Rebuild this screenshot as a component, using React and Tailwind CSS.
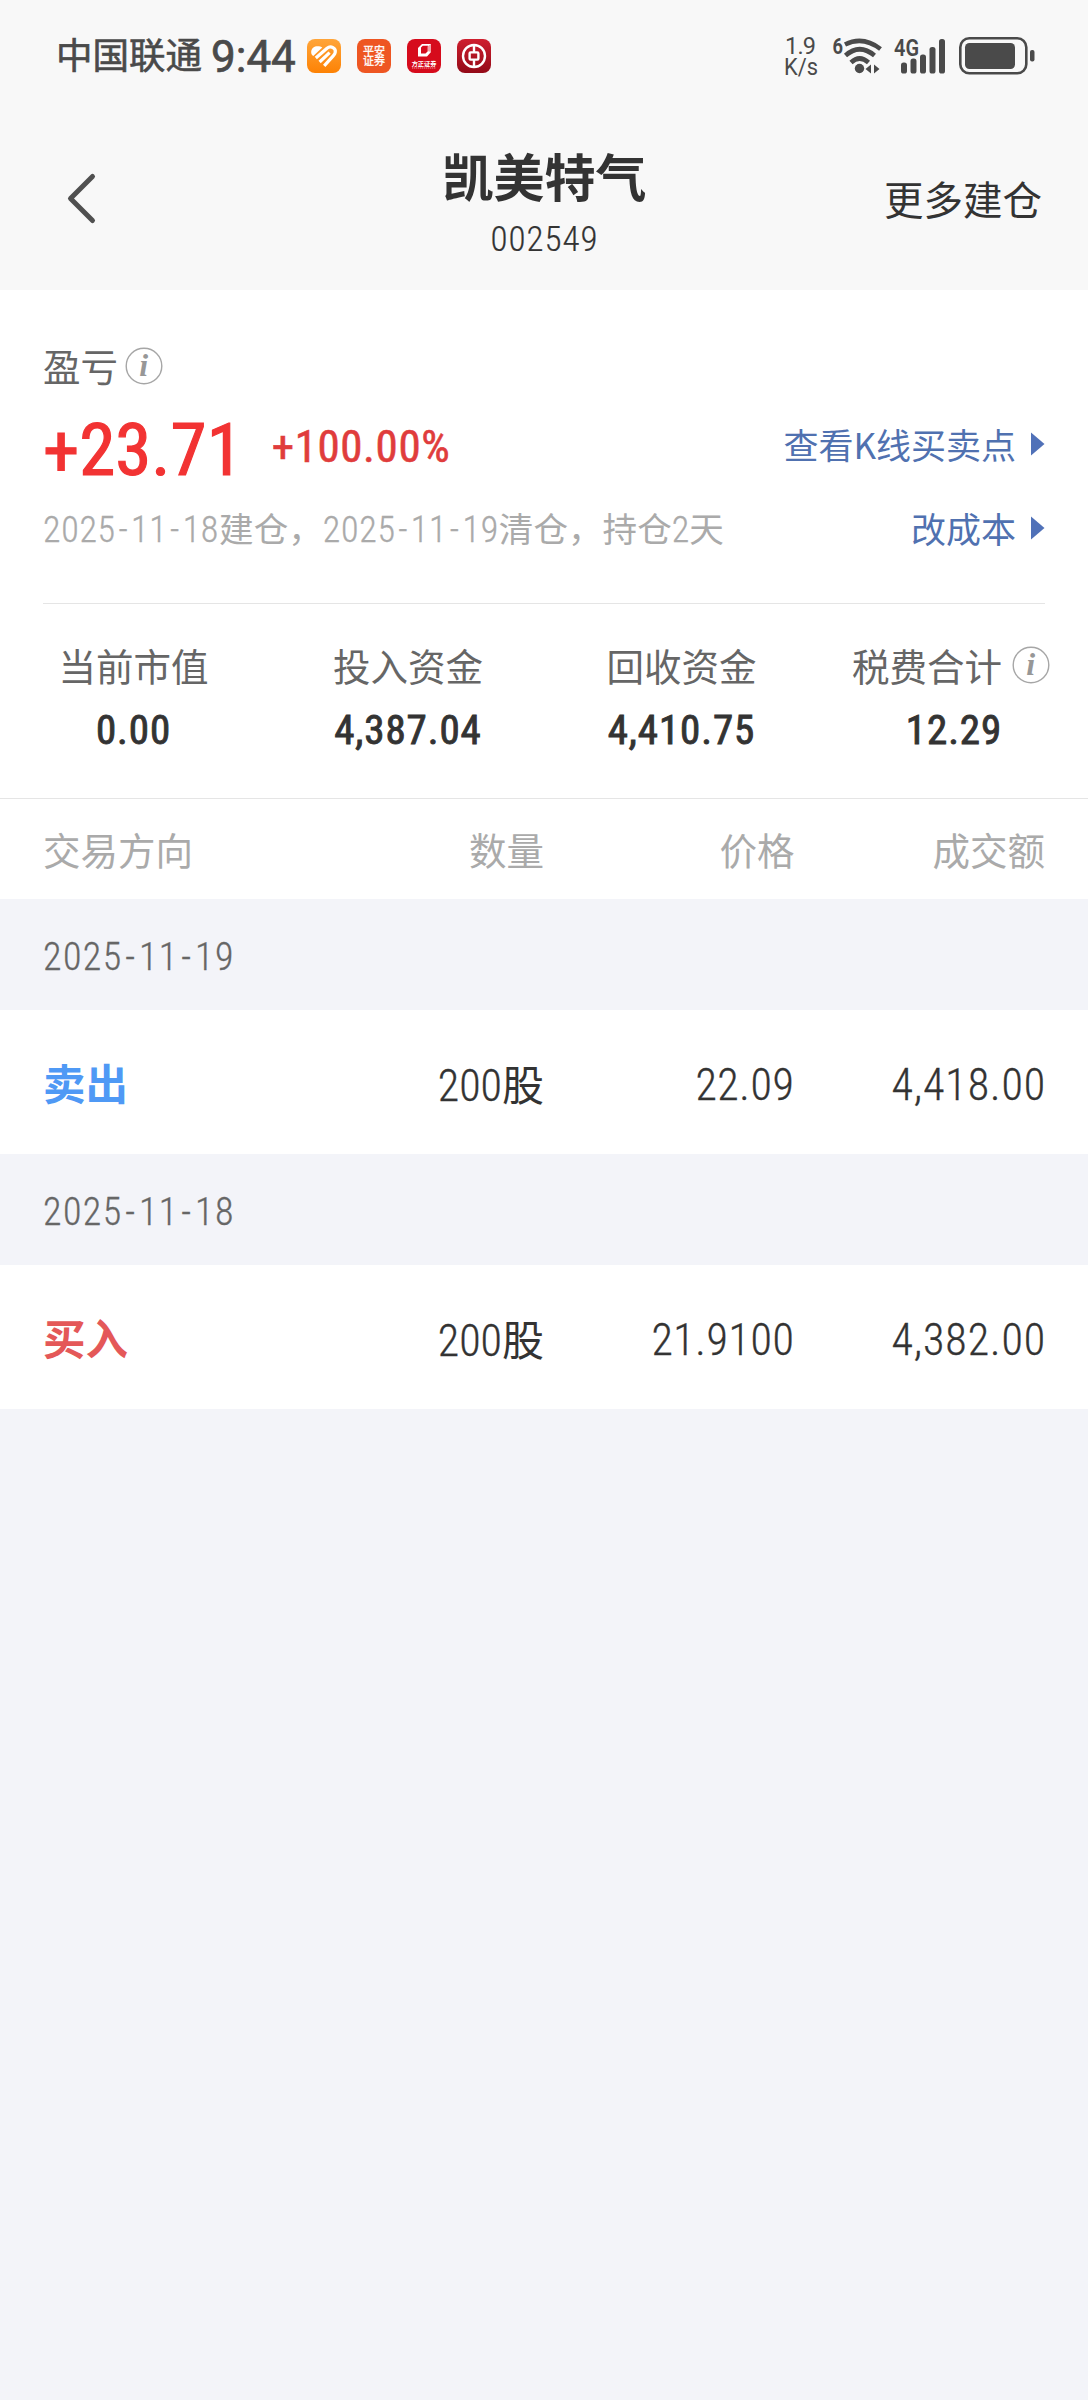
import clsx from "clsx";

const stats = [
  { label: "当前市值", value: "0.00" },
  { label: "投入资金", value: "4,387.04" },
  { label: "回收资金", value: "4,410.75" },
  { label: "税费合计", value: "12.29", info: true },
];

const trades = [
  { date: "2025-11-19", side: "卖出", color: "text-[#4f99f5]", qty: "200", price: "22.09", amount: "4,418.00" },
  { date: "2025-11-18", side: "买入", color: "text-[#e45858]", qty: "200", price: "21.9100", amount: "4,382.00" },
];

function Num({ className, children }) {
  return (
    <span className={clsx("font-['Roboto_Condensed','Roboto',sans-serif] [font-stretch:75%]", className)}>
      {children}
    </span>
  );
}

function DateText({ value, className }) {
  return (
    <Num className={className}>
      {value.split("-").map((part, i) => (
        <span key={i}>
          {i > 0 && <span className="mx-[2.6px]">-</span>}
          {part}
        </span>
      ))}
    </Num>
  );
}

function InfoIcon({ className }) {
  return (
    <svg width="38" height="38" viewBox="0 0 38 38" className={clsx("shrink-0", className)}>
      <circle cx="19" cy="19" r="17.8" fill="none" stroke="#a6a6a6" strokeWidth="1.4" />
      <text x="18.8" y="29" textAnchor="middle" fontSize="32" fontWeight="700" fontStyle="italic" fill="#979797" fontFamily="Liberation Serif, serif">
        i
      </text>
    </svg>
  );
}

function Arrow() {
  return (
    <svg width="14" height="24" viewBox="0 0 14 24" className="ml-[15px] shrink-0">
      <path d="M0 0.5 L13.5 12 L0 23.5 Z" fill="#5071b8" />
    </svg>
  );
}

function AppIcons() {
  return (
    <div className="flex gap-4">
      <svg width="34" height="34" viewBox="0 0 34 34">
        <defs>
          <linearGradient id="orange" x1="0" y1="0" x2="0" y2="1">
            <stop offset="0" stopColor="#ffa53a" />
            <stop offset="1" stopColor="#fd8204" />
          </linearGradient>
        </defs>
        <rect width="34" height="34" rx="8" fill="url(#orange)" />
        <path d="M5 16 C2.8 12 5.5 7.6 9.5 7.3 C12 7.1 14 7.6 15.3 8.6 L6.3 17 Z" fill="#fff" />
        <g fill="none" stroke="#fff" strokeWidth="3.2">
          <path d="M8.8 19 L20 9.2 C24 6.2 29.2 9.4 28.2 13.6 C28 15 27 16 26 17.1 L17.2 26.8" />
          <path d="M12.6 23 L22.6 13.6" />
        </g>
      </svg>
      <svg width="34" height="34" viewBox="0 0 34 34">
        <rect width="34" height="34" rx="8" fill="#ee5622" />
        <g fill="#fff" fontSize="11" fontWeight="400" textAnchor="middle" fontFamily="Noto Sans CJK SC, sans-serif" stroke="#fff" strokeWidth="0.3">
          <text x="17" y="15.6">平安</text>
          <text x="17" y="26.2">证券</text>
        </g>
      </svg>
      <svg width="34" height="34" viewBox="0 0 34 34">
        <rect width="34" height="34" rx="8" fill="#d60b1c" />
        <path d="M15 5 L24 5 L24 13 L20 17.5 L11 17.5 L11 9 Z M14 8.5 L14 14.5 L18.5 14.5 L21 12 L21 6.8 L15.8 6.8 Z" fill="#fff" fillRule="evenodd" />
        <path d="M20.5 7.5 L24 5 L24 13 L20.5 12 Z" fill="#f3a3a8" />
        <text x="17" y="26.6" textAnchor="middle" fontSize="6.2" fontWeight="700" fill="#fff" fontFamily="Noto Sans CJK SC, sans-serif">方正证券</text>
        <path d="M5 29 H29" stroke="#f0a0a5" strokeWidth="0.9" strokeDasharray="1.4 0.6" />
      </svg>
      <svg width="34" height="34" viewBox="0 0 34 34">
        <defs>
          <linearGradient id="crimson" x1="0" y1="0" x2="0" y2="1">
            <stop offset="0" stopColor="#cf1f2e" />
            <stop offset="1" stopColor="#930a18" />
          </linearGradient>
        </defs>
        <rect width="34" height="34" rx="8" fill="url(#crimson)" />
        <g fill="none" stroke="#fff" strokeWidth="2.4">
          <circle cx="17" cy="17" r="11" />
          <rect x="12.6" y="13.4" width="8.8" height="7.2" rx="1" />
          <path d="M17 6 V13 M17 21 V28" />
        </g>
      </svg>
    </div>
  );
}

function StatusIcons() {
  return (
    <svg width="260" height="56" viewBox="776 28 260 56" fill="#4a4a4a" fontFamily="Roboto, sans-serif">
      <text x="785" y="54" fontSize="23.5" textLength="31">1.9</text>
      <text x="784" y="75" fontSize="23.5" textLength="34" lengthAdjust="spacingAndGlyphs">K/s</text>

      <text x="832.5" y="53.5" fontSize="22" fontWeight="700" textLength="10.5" lengthAdjust="spacingAndGlyphs">6</text>
      <g fill="none" stroke="#4a4a4a" strokeWidth="4.6">
        <path d="M845 44.5 Q863 35.5 880.5 49" />
        <path d="M845.5 55.5 Q859.5 43 874.5 55.5" />
        <path d="M851 62.5 Q859.5 54.5 868.5 62.5" />
      </g>
      <circle cx="859.5" cy="68.5" r="4.7" />
      <path d="M871 64.5 V73.5 L865.5 69 Z M874 64.5 L879.5 69 L874 73.5 Z" />

      <text x="894" y="55.5" fontSize="23" fontWeight="600" textLength="25" lengthAdjust="spacingAndGlyphs">4G</text>
      <rect x="901" y="62.5" width="6" height="11" rx="2.6" />
      <rect x="910.5" y="58.5" width="6" height="15" rx="2.6" />
      <rect x="920" y="54.5" width="6" height="19" rx="2.6" />
      <rect x="929.5" y="47" width="6" height="26.5" rx="2.6" />
      <rect x="939" y="39" width="6" height="34.5" rx="2.6" />

      <rect x="960.3" y="38.3" width="66" height="35" rx="9" fill="none" stroke="#4a4a4a" strokeWidth="2.6" />
      <rect x="965" y="43" width="50" height="26" rx="4.5" />
      <rect x="1030" y="50" width="4.5" height="11.5" rx="2" />
    </svg>
  );
}

export default function App() {
  return (
    <div className="w-[1088px] h-[2400px] bg-[#f3f4f9] text-[#333] font-['Noto_Sans_CJK_SC',sans-serif] whitespace-nowrap overflow-hidden">
      <header className="h-[290px] bg-[#f8f8f8]">
        <div className="h-28 pl-14 pr-[52px] flex items-center justify-between text-[#4a4a4a]">
          <div className="flex items-center">
            <span className="mb-[4px] text-[36.5px] leading-[44px] [-webkit-text-stroke:0.6px]">中国联通</span>
            <span className="ml-[9px] mr-[11px] mt-[2px] w-[85px] text-[44px] leading-[44px] font-['Roboto',sans-serif] [-webkit-text-stroke:0.7px]">9:44</span>
            <AppIcons />
          </div>
          <StatusIcons />
        </div>

        <div className="grid grid-cols-3 h-[178px] pl-[65px] pr-[46px]">
          <svg width="34" height="58" viewBox="0 0 34 58" className="mt-[57px]">
            <path d="M27.5 7.5 L5.5 29.5 L27.5 51.5" fill="none" stroke="#505050" strokeWidth="5" strokeLinecap="round" strokeLinejoin="round" />
          </svg>
          <div className="flex flex-col items-center -ml-[18px] pt-[33px]">
            <h1 className="text-[51px] leading-[60px] font-bold">凯美特气</h1>
            <Num className="mt-[14px] text-[35px] leading-[42px] font-light tracking-[1px] [-webkit-text-stroke:0.2px]">002549</Num>
          </div>
          <span className="justify-self-end mt-[56px] text-[39.5px] leading-[60px]">更多建仓</span>
        </div>
      </header>

      <main>
        <section className="bg-white h-[508px]">
          <div className="mx-[43px] h-[314px] pt-[52px] border-b border-[#e5e5e5]">
            <div className="flex items-center h-12 text-[#666]">
              <span className="mb-[3px] text-[37.5px] leading-[48px]">盈亏</span>
              <InfoIcon className="ml-[7px]" />
            </div>
            <div className="flex items-center justify-between mt-[14px] h-20">
              <div className="flex items-center">
                <Num className="mt-[11px] text-[73px] leading-[80px] text-[#f23333] [-webkit-text-stroke:1.2px]">+23.71</Num>
                <Num className="ml-[29px] mt-[6px] text-[45px] leading-[80px] tracking-[0.6px] text-[#e03c3c] [-webkit-text-stroke:0.6px]">+100.00%</Num>
              </div>
              <a className="flex items-center mb-px text-[35px] leading-[48px] text-[#5071b0]">
                查看K线买卖点
                <Arrow />
              </a>
            </div>
            <div className="flex items-center justify-between mt-[20px] h-12 text-[34.6px] text-[#aaa]">
              <p className="leading-[48px]">
                <DateText value="2025-11-18" className="text-[36px] font-light tracking-[0.7px] [-webkit-text-stroke:0.3px]" />
                建仓，
                <DateText value="2025-11-19" className="text-[36px] font-light tracking-[0.7px] [-webkit-text-stroke:0.3px]" />
                清仓，持仓
                <Num className="text-[36px] font-light [-webkit-text-stroke:0.3px]">2</Num>天
              </p>
              <a className="flex items-center text-[35px] leading-[48px] text-[#5071b0]">
                改成本
                <Arrow />
              </a>
            </div>
          </div>

          <div className="grid grid-cols-[267px_282px_265px_1fr] pt-[37px]">
            {stats.map((s) => (
              <div key={s.label} className="flex flex-col items-center">
                <div className="flex items-center h-12 text-[37.5px] leading-[48px] text-[#666]">
                  {s.label}
                  {s.info && <InfoIcon className="ml-2.5" />}
                </div>
                <Num className={clsx("mt-[17px] text-[41px] leading-[48px] tracking-[0.9px] [-webkit-text-stroke:0.9px]", s.info && "pl-1.5")}>
                  {s.value}
                </Num>
              </div>
            ))}
          </div>
        </section>

        <div className="grid grid-cols-4 h-[101px] px-[43px] items-center bg-white border-t border-[#e5e5e5] text-[37.5px] text-[#aaa]">
          <span>交易方向</span>
          <span className="text-right">数量</span>
          <span className="text-right">价格</span>
          <span className="text-right">成交额</span>
        </div>

        {trades.map((t) => (
          <section key={t.date}>
            <div className="flex items-center h-[111px] pl-[43px] pt-1">
              <DateText value={t.date} className="text-[38px] leading-[48px] font-light tracking-[1.4px] text-[#666] [-webkit-text-stroke:0.3px]" />
            </div>
            <div className="grid grid-cols-4 items-center h-36 px-[43px] pt-[5px] bg-white">
              <span className={clsx("mb-[5px] text-[42.5px] leading-[60px] font-bold", t.color)}>{t.side}</span>
              <span className="text-right text-[42px] leading-[60px]">
                <Num className="text-[44px] font-light [-webkit-text-stroke:0.3px]">{t.qty}</Num>股
              </span>
              <Num className="text-right text-[44px] leading-[60px] font-light tracking-[0.6px] [-webkit-text-stroke:0.3px]">{t.price}</Num>
              <Num className="-mr-px text-right text-[44px] leading-[60px] font-light tracking-[0.9px] [-webkit-text-stroke:0.3px]">{t.amount}</Num>
            </div>
          </section>
        ))}
      </main>
    </div>
  );
}
